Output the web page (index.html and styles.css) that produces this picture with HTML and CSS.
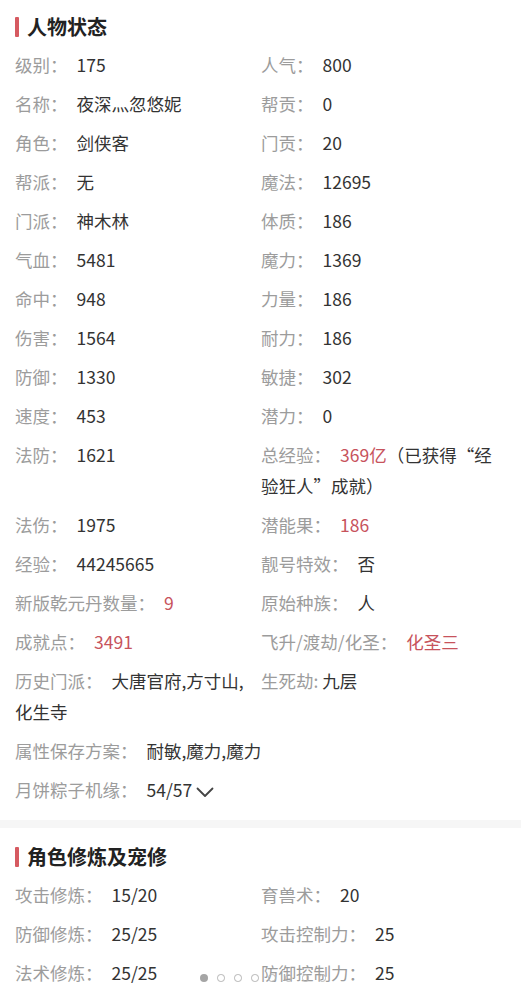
FILE: index.html
```html
<!DOCTYPE html>
<html lang="zh-CN">
<head>
<meta charset="utf-8">
<title>人物状态</title>
<link rel="stylesheet" href="styles.css">
</head>
<body>
<section class="panel first">
  <h2 class="title"><span class="bar"></span>人物状态</h2>
  <div class="grid">
    <div class="cell"><span class="k">级别：</span><span class="v">175</span></div>
    <div class="cell"><span class="k">人气：</span><span class="v">800</span></div>
    <div class="cell"><span class="k">名称：</span><span class="v">夜深灬忽悠妮</span></div>
    <div class="cell"><span class="k">帮贡：</span><span class="v">0</span></div>
    <div class="cell"><span class="k">角色：</span><span class="v">剑侠客</span></div>
    <div class="cell"><span class="k">门贡：</span><span class="v">20</span></div>
    <div class="cell"><span class="k">帮派：</span><span class="v">无</span></div>
    <div class="cell"><span class="k">魔法：</span><span class="v">12695</span></div>
    <div class="cell"><span class="k">门派：</span><span class="v">神木林</span></div>
    <div class="cell"><span class="k">体质：</span><span class="v">186</span></div>
    <div class="cell"><span class="k">气血：</span><span class="v">5481</span></div>
    <div class="cell"><span class="k">魔力：</span><span class="v">1369</span></div>
    <div class="cell"><span class="k">命中：</span><span class="v">948</span></div>
    <div class="cell"><span class="k">力量：</span><span class="v">186</span></div>
    <div class="cell"><span class="k">伤害：</span><span class="v">1564</span></div>
    <div class="cell"><span class="k">耐力：</span><span class="v">186</span></div>
    <div class="cell"><span class="k">防御：</span><span class="v">1330</span></div>
    <div class="cell"><span class="k">敏捷：</span><span class="v">302</span></div>
    <div class="cell"><span class="k">速度：</span><span class="v">453</span></div>
    <div class="cell"><span class="k">潜力：</span><span class="v">0</span></div>
    <div class="cell"><span class="k">法防：</span><span class="v">1621</span></div>
    <div class="cell"><span class="k">总经验：</span><span class="v"><span class="red">369亿</span>（已获得“经验狂人”成就）</span></div>
    <div class="cell"><span class="k">法伤：</span><span class="v">1975</span></div>
    <div class="cell"><span class="k">潜能果：</span><span class="v red">186</span></div>
    <div class="cell"><span class="k">经验：</span><span class="v">44245665</span></div>
    <div class="cell"><span class="k">靓号特效：</span><span class="v">否</span></div>
    <div class="cell"><span class="k">新版乾元丹数量：</span><span class="v red">9</span></div>
    <div class="cell"><span class="k">原始种族：</span><span class="v">人</span></div>
    <div class="cell"><span class="k">成就点：</span><span class="v red">3491</span></div>
    <div class="cell"><span class="k">飞升/渡劫/化圣：</span><span class="v red">化圣三</span></div>
    <div class="cell"><span class="k">历史门派：</span><span class="v">大唐官府,方寸山,化生寺</span></div>
    <div class="cell"><span class="k">生死劫: </span><span class="v tight">九层</span></div>
    <div class="cell wide"><span class="k">属性保存方案：</span><span class="v">耐敏,魔力,魔力</span></div>
    <div class="cell wide"><span class="k">月饼粽子机缘：</span><span class="v">54/57</span><svg class="chev" width="18" height="11" viewBox="0 0 18 11"><polyline points="1.5,1.5 9,9 16.5,1.5" fill="none" stroke="#444" stroke-width="1.8" stroke-linecap="round" stroke-linejoin="round"/></svg></div>
  </div>
</section>
<div class="sep"></div>
<section class="panel second">
  <h2 class="title"><span class="bar"></span>角色修炼及宠修</h2>
  <div class="grid">
    <div class="cell"><span class="k">攻击修炼：</span><span class="v">15/20</span></div>
    <div class="cell"><span class="k">育兽术：</span><span class="v">20</span></div>
    <div class="cell"><span class="k">防御修炼：</span><span class="v">25/25</span></div>
    <div class="cell"><span class="k">攻击控制力：</span><span class="v">25</span></div>
    <div class="cell"><span class="k">法术修炼：</span><span class="v">25/25</span></div>
    <div class="cell"><span class="k">防御控制力：</span><span class="v">25</span></div>
  </div>
</section>
<div class="dots">
  <span class="dot on"></span><span class="dot"></span><span class="dot"></span><span class="dot"></span><span class="dot"></span><span class="dot"></span><span class="dot"></span><span class="dot"></span>
</div>
</body>
</html>
```

FILE: styles.css
```css
html, body {
  margin: 0;
  padding: 0;
  background: #ffffff;
}
body {
  font-family: "Noto Sans CJK SC", "Noto Sans", sans-serif;
  font-size: 17.5px;
  color: #333333;
  width: 521px;
  height: 1000px;
  overflow: hidden;
  position: relative;
}
.panel {
  padding: 0 15px;
}
.first {
  padding-top: 12px;
  padding-bottom: 15.5px;
}
.second {
  padding-top: 14px;
}
.title {
  margin: 0 0 6.5px 0;
  height: 30px;
  line-height: 30px;
  font-size: 20px;
  font-weight: 700;
  color: #222222;
  display: flex;
  align-items: center;
  gap: 8px;
}
.bar {
  display: inline-block;
  width: 4px;
  height: 20px;
  background: #d65a61;
  border-radius: 1px;
}
.grid {
  display: grid;
  grid-template-columns: 246px 245px;
  row-gap: 8px;
}
.cell {
  line-height: 31px;
  min-height: 31px;
}
.wide {
  grid-column: 1 / -1;
}
.k {
  color: #9c9c9c;
  margin-right: 9px;
}
.v {
  color: #333333;
}
.red {
  color: #c7535c;
}
.k + .tight {
  margin-left: -9px;
}
.chev {
  margin-left: 4px;
  vertical-align: -1px;
}
.sep {
  height: 8px;
  background: #f6f6f6;
}
.dots {
  position: absolute;
  left: 200px;
  top: 974px;
  display: flex;
  gap: 9.4px;
  align-items: center;
}
.dot {
  width: 5.5px;
  height: 5.5px;
  border: 1.5px solid #b5b5b5;
  border-radius: 50%;
  background: transparent;
}
.dot.on {
  width: 8px;
  height: 8px;
  border: 0;
  background: #a5a5a5;
}
```
